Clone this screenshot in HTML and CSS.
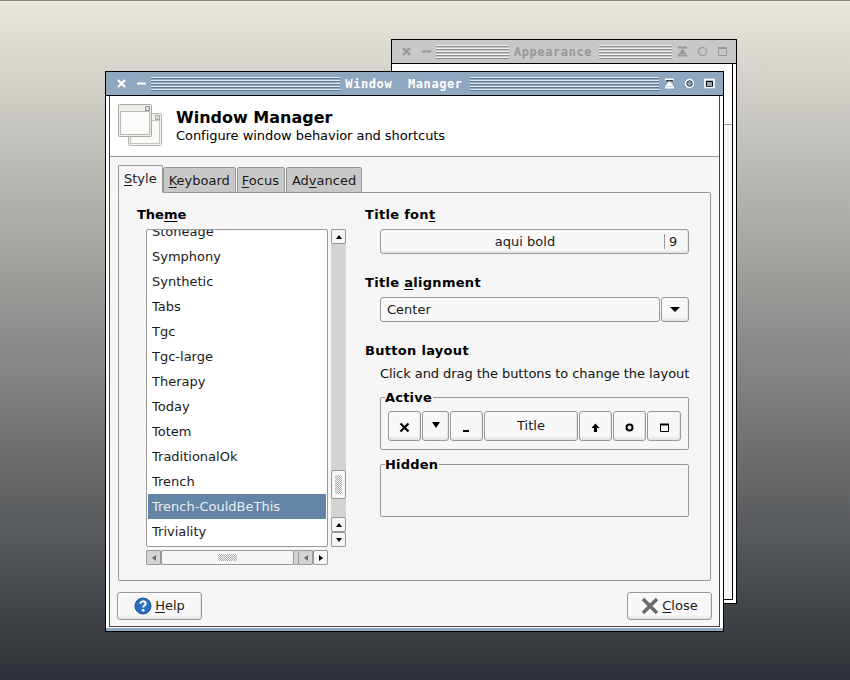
FILE: index.html
```html
<!DOCTYPE html>
<html lang="en">
<head>
	<meta charset="utf-8">
	<title>Window Manager</title>
	<link rel="stylesheet" href="styles.css">
</head>
<body>
	<!-- window behind -->
	<div class="win back">
		<div class="titlebar">
			<span class="tb-btn"><svg width="11" height="11" viewBox="0 0 11 11"><path d="M2 2l7 7M9 2l-7 7" stroke="#989898" stroke-width="2.4"/></svg></span>
			<span class="tb-btn"><svg width="11" height="11" viewBox="0 0 11 11"><path d="M1 5.5h9" stroke="#989898" stroke-width="2"/></svg></span>
			<span class="stripes"></span>
			<span class="tb-title">Appearance</span>
			<span class="stripes"></span>
			<span class="tb-btn"><svg width="11" height="11" viewBox="0 0 11 11"><path d="M1 1.5h9M1 9.5h9" stroke="#989898" stroke-width="2"/><path d="M5.5 2.5L9.5 8h-8z" fill="#989898"/></svg></span>
			<span class="tb-btn"><svg width="11" height="11" viewBox="0 0 11 11"><circle cx="5.5" cy="5.5" r="4" fill="none" stroke="#989898" stroke-width="1.2"/></svg></span>
			<span class="tb-btn"><svg width="11" height="11" viewBox="0 0 11 11"><path d="M1.500 1.500h8v8h-8z" fill="none" stroke="#989898"/><path d="M1 2h9" stroke="#989898" stroke-width="2"/></svg></span>
		</div>
		<div class="back-body">
			<div class="back-header"></div>
		</div>
	</div>

	<!-- main window -->
	<div class="win main">
		<div class="titlebar">
			<span class="tb-btn"><svg width="11" height="11" viewBox="0 0 11 11"><path d="M2 2l7 7M9 2l-7 7" stroke="#fff" stroke-width="2.4"/></svg></span>
			<span class="tb-btn"><svg width="11" height="11" viewBox="0 0 11 11"><path d="M1 5.5h9" stroke="#fff" stroke-width="2"/></svg></span>
			<span class="stripes"></span>
			<span class="tb-title">Window  Manager</span>
			<span class="stripes"></span>
			<span class="tb-btn"><svg width="11" height="11" viewBox="0 0 11 11"><path d="M1 1.500h9M1 9.500h9" stroke="#fff" stroke-width="2"/><path d="M5.500 2.500L9.500 8h-8z" fill="#fff"/><path d="M2 2.800h7" stroke="#000"/></svg></span>
			<span class="tb-btn"><svg width="11" height="11" viewBox="0 0 11 11"><circle cx="5.500" cy="5.500" r="2.800" fill="none" stroke="#1a2530" stroke-width="1"/><circle cx="5.500" cy="5.500" r="4" fill="none" stroke="#fff" stroke-width="1.400"/></svg></span>
			<span class="tb-btn"><svg width="11" height="11" viewBox="0 0 11 11"><path d="M2.500 3.500h6v5h-6z" fill="none" stroke="#000"/><path d="M1 1.500h9v8h-9z" fill="none" stroke="#fff" stroke-width="1.600"/></svg></span>
		</div>
		<div class="client">
			<div class="client-inner">
				<div class="header">
					<svg class="header-icon" width="46" height="44" viewBox="0 0 46 44">
						<rect x="11.500" y="10.500" width="33" height="32" rx="1" fill="#f2f2ee" stroke="#b4b4b0"/>
						<rect x="13.500" y="17.500" width="29" height="23" fill="#fafaf8" stroke="#c4c4c0"/>
						<rect x="38.500" y="12.500" width="4" height="4" fill="#ddd" stroke="#aaa"/>
						<rect x="1.500" y="1.500" width="33" height="32" rx="1" fill="#eeeeea" stroke="#a8a8a4"/>
						<rect x="3.500" y="8.500" width="29" height="23" fill="#fbfbfa" stroke="#b8b8b4"/>
						<rect x="28.500" y="3.500" width="4" height="4" fill="#ddd" stroke="#999"/>
					</svg>
					<div class="header-text">
						<h1 class="header-title">Window Manager</h1>
						<p class="header-sub">Configure window behavior and shortcuts</p>
					</div>
				</div>
				<div class="content">
					<div class="tabs">
						<span class="tab active"><u>S</u>tyle</span>
						<span class="tab"><u>K</u>eyboard</span>
						<span class="tab tab-focus"><u>F</u>ocus</span>
						<span class="tab">Ad<u>v</u>anced</span>
					</div>
					<div class="panel">
						<div class="theme-col">
							<div class="label">The<u>m</u>e</div>
							<div class="theme-box">
								<div class="list-wrap">
									<div class="list">
										<div class="list-items">
											<div class="item">Stoneage</div>
											<div class="item">Symphony</div>
											<div class="item">Synthetic</div>
											<div class="item">Tabs</div>
											<div class="item">Tgc</div>
											<div class="item">Tgc-large</div>
											<div class="item">Therapy</div>
											<div class="item">Today</div>
											<div class="item">Totem</div>
											<div class="item">TraditionalOk</div>
											<div class="item">Trench</div>
											<div class="item selected">Trench-CouldBeThis</div>
											<div class="item">Triviality</div>
										</div>
									</div>
									<div class="vscroll">
										<span class="sb-btn v"><i class="arr up"></i></span>
										<span class="v-trough"><span class="v-thumb"></span></span>
										<span class="sb-btn v"><i class="arr up"></i></span>
										<span class="sb-btn v"><i class="arr down"></i></span>
									</div>
								</div>
								<div class="hscroll">
									<span class="sb-btn h off"><i class="arr left"></i></span>
									<span class="h-thumb"></span>
									<span class="h-trough"></span>
									<span class="sb-btn h off"><i class="arr left"></i></span>
									<span class="sb-btn h"><i class="arr right"></i></span>
								</div>
							</div>
						</div>
						<div class="opts">
							<div class="label wide">Title fon<u>t</u></div>
							<div class="indent font-btn">
								<span class="font-name">aqui bold</span>
								<span class="font-size">9</span>
							</div>
							<div class="label wide gap">Title <u>a</u>lignment</div>
							<div class="indent combo">
								<span class="combo-text">Center</span>
								<span class="combo-btn"><i class="arr down big"></i></span>
							</div>
							<div class="label wide gap">Button layout</div>
							<p class="indent hint">Click and drag the buttons to change the layout</p>
							<fieldset class="indent group">
								<legend>Active</legend>
								<div class="layout-btns">
									<span class="lb w33"><svg width="11" height="11" viewBox="0 0 11 11"><path d="M1.500 1.500l8 8M9.500 1.500l-8 8" stroke="#000" stroke-width="2.200"/></svg></span>
									<span class="lb w27"><i class="arr down tall"></i></span>
									<span class="lb w33"><svg width="11" height="11" viewBox="0 0 11 11"><path d="M2 9h6" stroke="#000" stroke-width="2"/></svg></span>
									<span class="lb title">Title</span>
									<span class="lb w33"><svg width="11" height="11" viewBox="0 0 11 11"><path d="M5.500 1.500L9.500 6H7v4H4V6H1.500z" fill="#000"/></svg></span>
									<span class="lb w33"><svg width="11" height="11" viewBox="0 0 11 11"><circle cx="5.500" cy="5.500" r="3" fill="none" stroke="#000" stroke-width="2"/></svg></span>
									<span class="lb w34"><svg width="11" height="11" viewBox="0 0 11 11"><path d="M1.500 2.500h8v7h-8z" fill="none" stroke="#000"/><path d="M1 2.500h9" stroke="#000" stroke-width="2"/></svg></span>
								</div>
							</fieldset>
							<fieldset class="indent group hidden-group">
								<legend>Hidden</legend>
							</fieldset>
						</div>
					</div>
					<div class="footer">
						<span class="btn">
							<svg width="18" height="18" viewBox="0 0 18 18"><circle cx="9" cy="9" r="8" fill="#2a6fc0" stroke="#1d528f"/><path d="M6.500 6.800c0-3.200 5.200-3.200 5.200-.2 0 2-2.500 1.800-2.500 3.900" fill="none" stroke="#fff" stroke-width="2"/><circle cx="9.200" cy="13.300" r="1.300" fill="#fff"/></svg>
							<span class="btn-text"><u>H</u>elp</span>
						</span>
						<span class="btn">
							<svg width="18" height="18" viewBox="0 0 18 18"><path d="M2 2l14 14M16 2L2 16" stroke="#6a6a68" stroke-width="3.400"/></svg>
							<span class="btn-text"><u>C</u>lose</span>
						</span>
					</div>
				</div>
			</div>
		</div>
		<div class="bottom-bar"></div>
	</div>
</body>
</html>
```
FILE: styles.css
```css
html, body {
	height: 100%;
}
body {
	margin: 0;
	overflow: hidden;
	font-family: "DejaVu Sans", sans-serif;
	font-size: 13px;
	color: #1a1a1a;
	background: linear-gradient(#8a8a86 0, #8a8a86 1px, #e9e6dd 1px, #2e3238 100%);
}
u {
	text-underline-offset: 2px;
}

/* windows */
.win {
	position: absolute;
	box-sizing: border-box;
	display: flex;
	flex-direction: column;
	border: 1px solid #000;
}
.main {
	left: 105px;
	top: 71px;
	width: 619px;
	height: 561px;
	background: #8fa7bf;
}
.back {
	left: 391px;
	top: 39px;
	width: 346px;
	height: 565px;
	background: #fff;
}
.titlebar {
	flex: none;
	height: 23px;
	display: flex;
	align-items: center;
	padding: 0 4px 0 5px;
	background: #8fa7bf;
	border-bottom: 1px solid #000;
	color: #fff;
}
.back .titlebar {
	padding-left: 4px;
	background: #c8c8c8;
	color: #989898;
}
.tb-btn {
	flex: none;
	width: 20px;
	height: 11px;
	display: flex;
	justify-content: center;
}
.tb-btn svg {
	display: block;
}
.stripes {
	flex: 1;
	height: 14px;
	background: repeating-linear-gradient(#e3e9ef 0, #e3e9ef 1px, #5f7a95 1px, #5f7a95 2px, #8fa7bf 2px, #8fa7bf 3px);
}
.back .stripes {
	background: repeating-linear-gradient(#f0f0f0 0, #f0f0f0 1px, #8c8c8c 1px, #8c8c8c 2px, #c8c8c8 2px, #c8c8c8 3px);
}
.tb-title {
	padding: 0 7px 0 5px;
	font-family: "DejaVu Sans Mono", monospace;
	font-weight: bold;
	font-size: 12px;
	letter-spacing: 0.6px;
	white-space: pre;
}
.back-body {
	flex: 1;
	margin: 0 3px 3px 0;
	background: #f6f6f6;
	border-right: 1px solid #000;
	border-bottom: 1px solid #000;
}
.back-header {
	height: 60px;
	background: #fff;
	border-bottom: 1px solid #999;
}
.client {
	flex: 1;
	min-height: 0;
	display: flex;
	background: #fff;
	border: solid #fff;
	border-width: 0 3px;
}
.client-inner {
	flex: 1;
	min-width: 0;
	display: flex;
	flex-direction: column;
	background: #f6f6f6;
	border: 1px solid #444;
	border-top: 0;
}
.bottom-bar {
	flex: none;
	height: 3px;
	border-top: 1px solid #fff;
}

/* header */
.header {
	flex: none;
	height: 61px;
	box-sizing: border-box;
	display: flex;
	align-items: center;
	gap: 13px;
	padding: 0 0 3px 7px;
	background: #fff;
	border-bottom: 1px solid #999;
}
.header-icon {
	display: block;
}
.header-text {
	padding-top: 2px;
}
.header-title {
	margin: 0;
	font-size: 16px;
	line-height: 20px;
	color: #000;
}
.header-sub {
	margin: 0;
	line-height: 16px;
	letter-spacing: -0.05px;
	color: #000;
}

/* notebook */
.content {
	flex: 1;
	min-height: 0;
	display: flex;
	flex-direction: column;
	padding: 9px 8px 6px 8px;
}
.tabs {
	flex: none;
	display: flex;
	align-items: flex-end;
	height: 27px;
	position: relative;
	z-index: 1;
	margin-bottom: -1px;
}
.tab {
	box-sizing: border-box;
	height: 26px;
	line-height: 25px;
	padding: 0 5px;
	margin-left: 1px;
	background: #c8c8c8;
	border: 1px solid #999;
	border-radius: 2px 2px 0 0;
}
.tab-focus {
	padding-left: 4px;
}
.tab.active {
	height: 28px;
	line-height: 26px;
	margin-left: 0;
	margin-right: -1px;
	background: #f6f6f6;
	border-bottom-color: #f6f6f6;
}
.panel {
	box-sizing: border-box;
	height: 389px;
	flex: none;
	display: flex;
	padding: 14px 0 0 18px;
	border: 1px solid #999;
	border-radius: 2px;
}
.label {
	font-weight: bold;
	line-height: 15px;
	color: #000;
}
.label.wide {
	letter-spacing: 0.3px;
}
.label.gap {
	margin-top: 21px;
}
.theme-col {
	width: 228px;
	flex: none;
}
.theme-box {
	width: 200px;
	margin: 7px 0 0 9px;
}
.list-wrap {
	display: flex;
	gap: 3px;
}
.list {
	box-sizing: border-box;
	width: 182px;
	height: 318px;
	padding: 1px;
	overflow: hidden;
	background: #fff;
	border: 1px solid #999;
	border-radius: 2px;
}
.list-items {
	margin-top: -12px;
}
.item {
	height: 25px;
	line-height: 25px;
	padding-left: 4px;
}
.item.selected {
	background: #6485a6;
	color: #e8edf2;
}

/* scrollbars */
.vscroll {
	box-sizing: border-box;
	width: 15px;
	height: 318px;
	display: flex;
	flex-direction: column;
	background: #d3d3d3;
}
.sb-btn {
	flex: none;
	box-sizing: border-box;
	display: flex;
	align-items: center;
	justify-content: center;
	background: #f6f6f6;
	border: 1px solid #999;
	border-radius: 2px;
}
.sb-btn.v {
	height: 15px;
}
.sb-btn.h {
	width: 15px;
	height: 15px;
}
.sb-btn.off {
	background: #d3d3d3;
}
.sb-btn.off .arr {
	opacity: 0.5;
}
.v-trough {
	flex: 1;
	display: flex;
	flex-direction: column;
	justify-content: flex-end;
	padding-bottom: 18px;
}
.v-thumb {
	box-sizing: border-box;
	height: 29px;
	background: #f6f6f6;
	border: 1px solid #999;
	border-radius: 2px;
	position: relative;
}
.v-thumb::after, .h-thumb::after {
	content: "";
	position: absolute;
	background-image: repeating-conic-gradient(#aaa 0 25%, transparent 0 50%);
	background-size: 2px 2px;
}
.v-thumb::after {
	left: 3px;
	top: 4px;
	width: 7px;
	height: 19px;
}
.hscroll {
	display: flex;
	width: 182px;
	height: 15px;
	margin-top: 3px;
	background: #d3d3d3;
}
.h-thumb {
	flex: none;
	box-sizing: border-box;
	width: 133px;
	background: #f6f6f6;
	border: 1px solid #999;
	border-radius: 2px;
	position: relative;
}
.h-thumb::after {
	left: 56px;
	top: 3px;
	width: 19px;
	height: 7px;
}
.h-trough {
	flex: 1;
	background: #d3d3d3;
	border: solid #999;
	border-width: 1px 0;
}
.arr {
	display: block;
	width: 0;
	height: 0;
	border: 3.5px solid transparent;
}
.arr.up {
	border-top-width: 0;
	border-bottom: 4px solid #000;
}
.arr.down {
	border-bottom-width: 0;
	border-top: 4px solid #000;
}
.arr.left {
	border-left-width: 0;
	border-right: 4px solid #000;
}
.arr.right {
	border-right-width: 0;
	border-left: 4px solid #000;
}
.arr.big {
	border-left-width: 5px;
	border-right-width: 5px;
	border-top-width: 5px;
}
.arr.tall {
	border-left-width: 4px;
	border-right-width: 4px;
	border-top-width: 6px;
}

/* right side */
.opts {
	flex: none;
	width: 324px;
}
.indent {
	margin-left: 15px;
}
.font-btn, .btn, .lb, .combo-btn {
	background: linear-gradient(#f8f8f8 85%, #e2e2e2);
	border: 1px solid #999;
	border-radius: 3px;
	box-shadow: inset -1px -1px 0 #e4e4e4;
}
.font-btn {
	box-sizing: border-box;
	width: 309px;
	height: 25px;
	margin-top: 7px;
	display: flex;
	align-items: center;
}
.font-name {
	flex: 1;
	text-align: center;
	padding-left: 5px;
}
.font-size {
	width: 24px;
	box-sizing: border-box;
	padding-left: 4px;
	line-height: 15px;
	border-left: 1px solid #999;
}
.combo {
	width: 309px;
	height: 25px;
	margin-top: 7px;
	display: flex;
	gap: 1px;
}
.combo-text {
	box-sizing: border-box;
	flex: 1;
	line-height: 23px;
	padding-left: 6px;
	background: #f8f8f8;
	border: 1px solid #999;
	border-radius: 3px;
}
.combo-btn {
	box-sizing: border-box;
	width: 28px;
	display: flex;
	align-items: center;
	justify-content: center;
}
.hint {
	margin-top: 8px;
	margin-bottom: 0;
	line-height: 15px;
	letter-spacing: -0.06px;
	color: #111;
	white-space: nowrap;
}
.group {
	box-sizing: border-box;
	width: 309px;
	min-width: 0;
	height: 60px;
	margin-top: 9px;
	margin-right: 0;
	margin-bottom: 0;
	padding: 6px 7px 0 7px;
	border: 1px solid #999;
	border-radius: 2px;
}
.group legend {
	padding: 0 1px 0 0;
	margin-left: -3px;
	font-weight: bold;
	line-height: 15px;
	letter-spacing: 0.2px;
	color: #000;
}
.hidden-group {
	margin-top: 7px;
}
.layout-btns {
	display: flex;
	gap: 1px;
}
.lb {
	box-sizing: border-box;
	height: 30px;
	flex: none;
	display: flex;
	align-items: center;
	justify-content: center;
}
.lb.w27 {
	width: 27px;
	padding-bottom: 2px;
}
.lb.w33 {
	width: 33px;
	padding-top: 2px;
}
.lb.w34 {
	width: 34px;
	padding-top: 2px;
}
.lb.title {
	width: 94px;
	padding-bottom: 2px;
}

/* buttons */
.footer {
	flex: 1;
	display: flex;
	align-items: flex-start;
	justify-content: space-between;
	padding: 11px 0 0 0;
	margin: 0 -1px;
}
.btn {
	box-sizing: border-box;
	width: 85px;
	height: 28px;
	display: flex;
	align-items: center;
	justify-content: center;
	gap: 3px;
}
.btn svg {
	display: block;
}
.btn-text {
	margin-top: -2px;
}
```
